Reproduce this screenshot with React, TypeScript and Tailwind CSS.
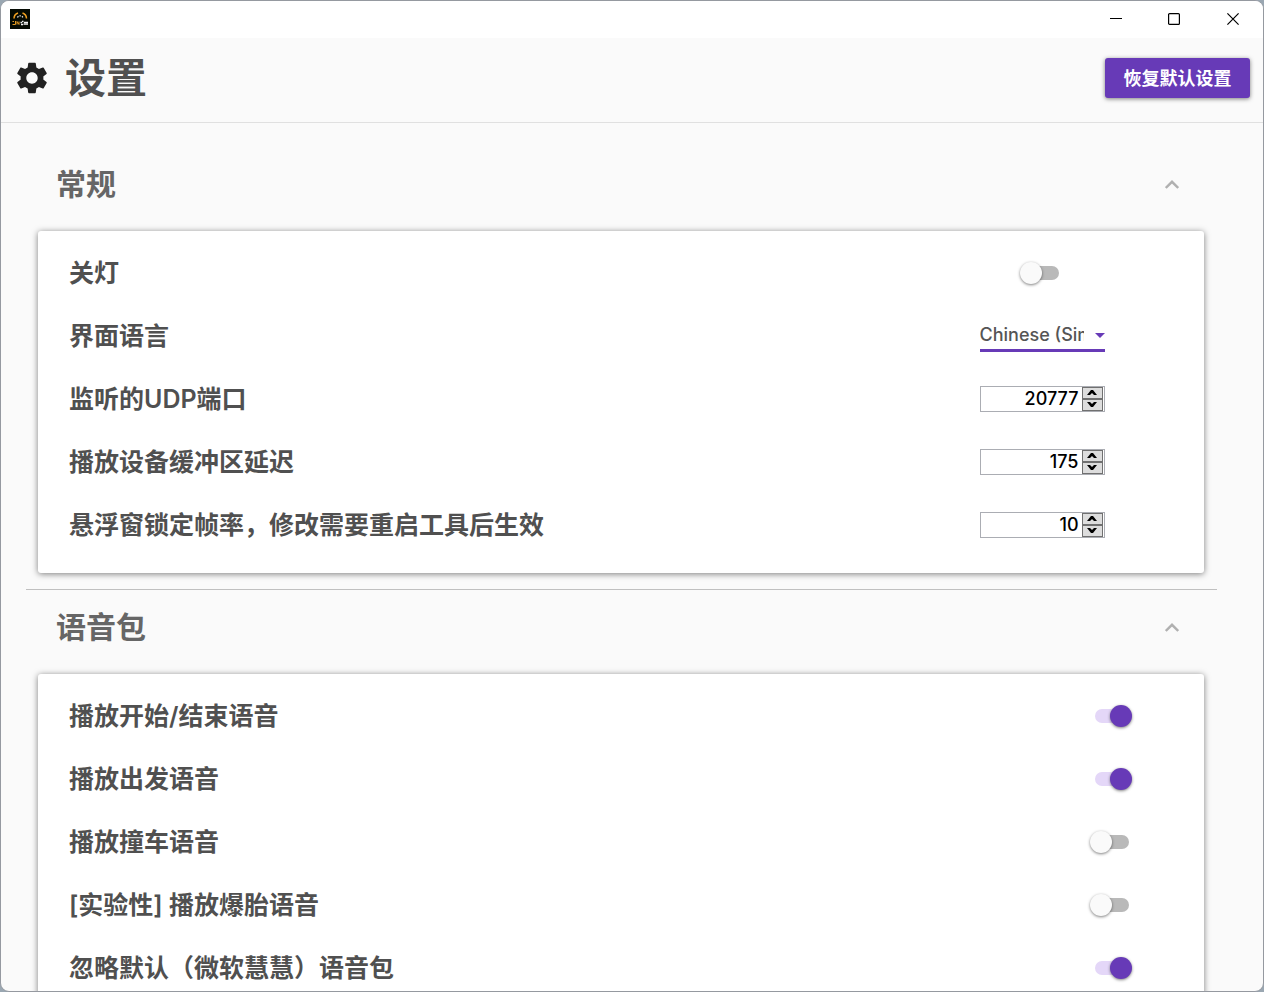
import { useState } from "react";
import { MdSettings } from "react-icons/md";

type SwitchProps = { id: string; defaultChecked?: boolean };

function Switch({ id, defaultChecked }: SwitchProps) {
  return (
    <input
      id={id}
      type="checkbox"
      role="switch"
      defaultChecked={defaultChecked}
      className="relative h-3.5 w-[34px] shrink-0 cursor-pointer appearance-none rounded-full bg-[#b9b9b9] before:absolute before:-top-1 before:-left-[5px] before:size-[22px] before:rounded-full before:bg-[#fafafa] before:shadow-[0_1px_3px_rgba(0,0,0,0.5)] checked:bg-[#e4d7f8] checked:before:left-[15px] checked:before:bg-[#673ab7]"
    />
  );
}

function NumberBox({ id, initial }: { id: string; initial: number }) {
  const [value, setValue] = useState(initial);
  return (
    <div className="flex h-[26px] w-[125px] border border-[#abadb3] bg-white pr-px">
      <input
        id={id}
        type="text"
        inputMode="numeric"
        value={value}
        onChange={(e) => setValue(Number(e.target.value) || 0)}
        className="min-w-0 flex-1 pt-px pr-[3px] text-right text-lg leading-6 font-medium text-black outline-none"
      />
      <div className="flex w-[21px] flex-col">
        <button
          type="button"
          aria-label="增加"
          onClick={() => setValue(value + 1)}
          className="flex flex-1 items-center justify-center border border-[#707070] bg-[#dddddd]"
        >
          <svg viewBox="0 0 10 5" className="h-[5px] w-2.5">
            <path d="M0 5 4 0h2l4 5H7L5 3 3 5z" />
          </svg>
        </button>
        <button
          type="button"
          aria-label="减少"
          onClick={() => setValue(value - 1)}
          className="flex flex-1 items-center justify-center border border-[#707070] bg-[#dddddd]"
        >
          <svg viewBox="0 0 10 5" className="h-[5px] w-2.5">
            <path d="M0 0 4 5h2l4-5H7L5 2 3 0z" />
          </svg>
        </button>
      </div>
    </div>
  );
}

function LanguageSelect({ id }: { id: string }) {
  return (
    <div className="relative w-[125px] border-b-3 border-[#673ab7] pt-0.5">
      <select
        id={id}
        className="block h-7 w-full cursor-pointer appearance-none bg-transparent pr-[21px] text-lg leading-7 font-medium text-[#555555] outline-none"
      >
        <option>Chinese (Simplified)</option>
      </select>
      <svg viewBox="0 0 10 5" className="pointer-events-none absolute top-3.5 right-0 h-[5px] w-2.5">
        <path d="M0 0h10L5 5z" fill="#673ab7" />
      </svg>
    </div>
  );
}

type RowProps = { id: string; label: string; wide?: boolean; children: React.ReactNode };

function Row({ id, label, wide, children }: RowProps) {
  return (
    <div className="flex h-[63px] items-center">
      <label htmlFor={id} className="flex-1 text-[25px] leading-8 font-semibold text-[#505050]">
        {label}
      </label>
      <div className={wide ? "flex w-[264px] justify-center" : "flex w-[124px] justify-center"}>{children}</div>
    </div>
  );
}

function Section({ title, children }: { title: string; children: React.ReactNode }) {
  const [open, setOpen] = useState(true);
  return (
    <section className="border-b border-[#c0c0c0] pb-4">
      <h2>
        <button
          type="button"
          aria-expanded={open}
          onClick={() => setOpen(!open)}
          className="flex h-[74px] w-full cursor-pointer items-center justify-between pr-[38px] pl-[30px] text-[30px] leading-10 font-bold text-[#666666]"
        >
          {title}
          <svg viewBox="0 0 14 9" className={open ? "h-[9px] w-3.5" : "h-[9px] w-3.5 rotate-180"}>
            <path d="M.8 8 7 1.8 13.2 8" fill="none" stroke="#b0b0b0" strokeWidth="2.4" />
          </svg>
        </button>
      </h2>
      {open && (
        <div className="mt-2.5 mr-[13px] ml-3 rounded-[3px] bg-white pt-2.5 pr-[30px] pb-[17px] pl-[31px] shadow-[0_1px_6px_rgba(0,0,0,0.5)]">
          {children}
        </div>
      )}
    </section>
  );
}

function AppIcon() {
  return (
    <svg viewBox="0 0 20 20" className="size-5">
      <rect width="20" height="20" fill="#050b03" />
      <path d="M4 9.500a6 6 0 0 1 4-5.500M12.500 4A6 6 0 0 1 16.500 9.500" fill="none" stroke="#f0a020" strokeWidth="1.500" />
      <path d="M7.500 8.500C8.500 6.500 11.500 6 13.500 9" fill="none" stroke="#e8e8e8" strokeWidth="1.200" strokeDasharray="1.500 1" />
      <path d="M2.500 12.500h1.500M5.500 12v3.500H2.500M7 15.500v-3l2 3v-3" fill="none" stroke="#e39a22" strokeWidth="1" />
      <path d="M10.500 13.500h1.500M11 15.500h2M12 12.500h1.500M14 13.500h4M13.500 15.200H18" fill="none" stroke="#f4f4f4" strokeWidth="1.300" />
    </svg>
  );
}

function TitleBar() {
  return (
    <div className="flex h-[37px] shrink-0 items-center justify-between bg-white pb-0.5 pl-[9px]">
      <AppIcon />
      <div className="flex h-full">
        <button type="button" aria-label="最小化" className="flex w-[58px] items-center justify-center">
          <svg viewBox="0 0 12 12" className="size-3" fill="none" stroke="#000">
            <path d="M0 5.500h12" />
          </svg>
        </button>
        <button type="button" aria-label="最大化" className="flex w-[58px] items-center justify-center">
          <svg viewBox="0 0 12 12" className="size-3" fill="none" stroke="#000">
            <rect x=".6" y=".6" width="10.800" height="10.800" rx="1" strokeWidth="1.200" />
          </svg>
        </button>
        <button type="button" aria-label="关闭" className="flex w-[60px] items-center justify-center">
          <svg viewBox="0 0 12 12" className="size-3" fill="none" stroke="#000" strokeWidth="1.200">
            <path d="M.4.4l11.200 11.200M11.600.4.4 11.600" />
          </svg>
        </button>
      </div>
    </div>
  );
}

export default function App() {
  return (
    <div className="h-screen bg-[#9aa7b2] font-['Inter','Noto_Sans_CJK_SC',sans-serif]">
      <div className="flex h-full flex-col overflow-hidden rounded-[9px] border border-[#9599a0] bg-[#fafafa]">
        <TitleBar />
        <header className="flex h-[85px] shrink-0 items-center justify-between border-b border-[#e0e0e0] pr-[13px] pb-1 pl-3">
          <h1 className="flex items-center gap-3.5 text-[41px] leading-[60px] font-bold text-[#505050]">
            <MdSettings className="size-[38px] text-[#212121]" />
            设置
          </h1>
          <button
            type="button"
            className="h-10 w-[145px] cursor-pointer rounded-[3px] bg-[#673ab7] pt-px text-lg leading-6 font-bold text-white shadow-[0_1px_4px_rgba(0,0,0,0.5)]"
          >
            恢复默认设置
          </button>
        </header>
        <main className="flex-1 overflow-y-auto pt-6 pr-[46px] pl-[25px] [scrollbar-width:none]">
          <Section title="常规">
            <Row id="dark" label="关灯" wide>
              <Switch id="dark" />
            </Row>
            <Row id="language" label="界面语言" wide>
              <LanguageSelect id="language" />
            </Row>
            <Row id="port" label="监听的UDP端口" wide>
              <NumberBox id="port" initial={20777} />
            </Row>
            <Row id="delay" label="播放设备缓冲区延迟" wide>
              <NumberBox id="delay" initial={175} />
            </Row>
            <Row id="fps" label="悬浮窗锁定帧率，修改需要重启工具后生效" wide>
              <NumberBox id="fps" initial={10} />
            </Row>
          </Section>
          <Section title="语音包">
            <Row id="start" label="播放开始/结束语音">
              <Switch id="start" defaultChecked />
            </Row>
            <Row id="go" label="播放出发语音">
              <Switch id="go" defaultChecked />
            </Row>
            <Row id="crash" label="播放撞车语音">
              <Switch id="crash" />
            </Row>
            <Row id="tyre" label="[实验性] 播放爆胎语音">
              <Switch id="tyre" />
            </Row>
            <Row id="default-voice" label="忽略默认（微软慧慧）语音包">
              <Switch id="default-voice" defaultChecked />
            </Row>
          </Section>
        </main>
      </div>
    </div>
  );
}
